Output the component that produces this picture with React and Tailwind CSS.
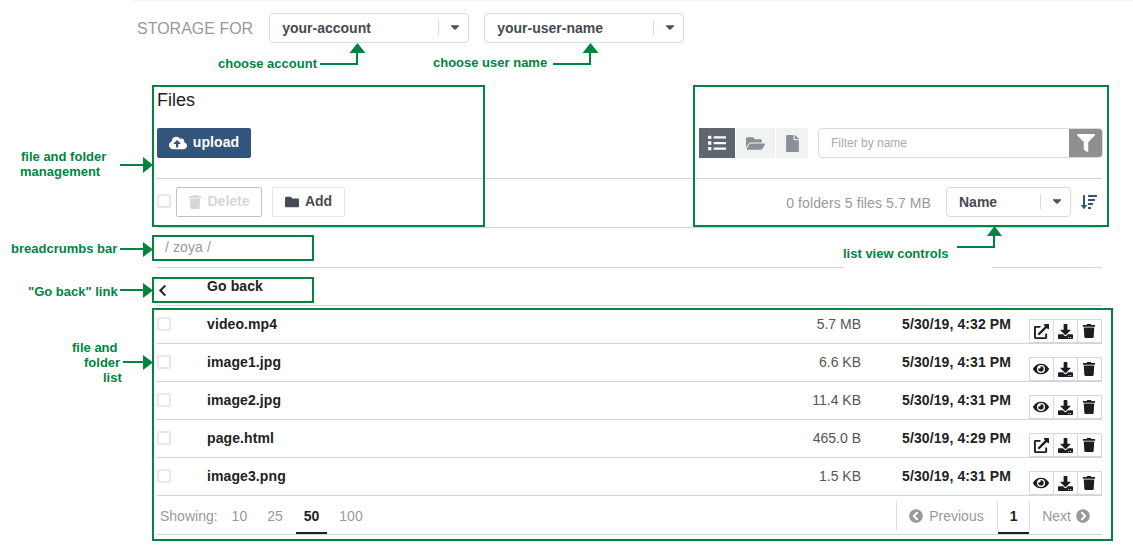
import React from "react";
import {
  FaCaretDown, FaCloudUploadAlt, FaTrash, FaFolder, FaFolderOpen, FaFile, FaList, FaFilter,
  FaEye, FaDownload, FaExternalLinkAlt, FaChevronLeft, FaChevronCircleLeft, FaChevronCircleRight, FaSortAmountDown,
} from "react-icons/fa";

const rows = [
  { name: "video.mp4", size: "5.7 MB", date: "5/30/19, 4:32 PM", ext: true },
  { name: "image1.jpg", size: "6.6 KB", date: "5/30/19, 4:31 PM" },
  { name: "image2.jpg", size: "11.4 KB", date: "5/30/19, 4:31 PM" },
  { name: "page.html", size: "465.0 B", date: "5/30/19, 4:29 PM", ext: true },
  { name: "image3.png", size: "1.5 KB", date: "5/30/19, 4:31 PM" },
];

function Select({ label, width, textWidth, className = "" }) {
  return (
    <div className={`flex items-center h-[30px] border border-[#d8dbde] rounded-[4px] bg-white ${width} ${className}`}>
      <span className={`pl-3 font-bold text-[14px] text-[#444b52] ${textWidth}`}>{label}</span>
      <span className="w-px h-[15px] bg-[#d8dbde] -mt-[1px]" />
      <FaCaretDown className="ml-[9px] text-[14px] text-[#4a5158] -mt-[2px]" />
    </div>
  );
}

function Check({ className = "" }) {
  return <span className={`block w-[14px] h-[14px] border-2 border-[#e6e8ea] rounded-[2px] bg-white ${className}`} />;
}

function ActionBtn({ children }) {
  return <span className="w-[25px] h-6 pr-px flex items-center justify-center border border-[#d3d9e0] -ml-px first:ml-0 text-[#1d1d1f]">{children}</span>;
}

function Box({ className }) {
  return <div className={`absolute border-2 border-[#00843f] pointer-events-none ${className}`} />;
}

function Label({ className, children }) {
  return <div className={`absolute font-bold text-[13px] leading-[16px] text-[#00843f] whitespace-nowrap ${className}`}>{children}</div>;
}

export default function App() {
  return (
    <div className="relative w-[1133px] h-[553px] overflow-hidden bg-white text-[14px] font-['Liberation_Sans',Arial,sans-serif]">
      <header className="ml-[133px] h-[85px] border-t border-[#f3f3f3] pl-[4px] pt-[12px]">
        <div className="flex items-center">
          <span className="text-[16px] text-[#999] mr-[16px] mt-[1px]">STORAGE FOR</span>
          <Select label="your-account" width="w-[200px]" textWidth="w-[168px]" className="mr-[15px]" />
          <Select label="your-user-name" width="w-[200px]" textWidth="w-[168px]" />
        </div>
      </header>

      <main className="ml-[157px] w-[945px]">
        <section className="flex justify-between h-[94px] border-b border-[#cfd5db]">
          <div>
            <h1 className="text-[18px] leading-[20px] text-[#222] mt-[5px]">Files</h1>
            <button className="mt-[18px] flex items-center justify-center gap-[6px] w-[94px] h-[30px] rounded-[2px] bg-[#34557b] text-white font-bold text-[14px] tracking-[0.1px]">
              <FaCloudUploadAlt className="text-[18px]" />
              <span className="-mt-[2px]">upload</span>
            </button>
          </div>
          <div className="flex items-start pt-[43px] -mr-px">
            <span className="w-[36px] h-[30px] flex items-center justify-center bg-[#5f666d] text-white text-[18px]"><FaList /></span>
            <span className="ml-px w-[39px] h-[30px] flex items-center justify-center bg-[#f1f3f3] text-[#8a9098] text-[19px]"><FaFolderOpen /></span>
            <span className="ml-px w-[32px] h-[30px] flex items-center justify-center bg-[#f1f3f3] text-[#8a9098] text-[17px]"><FaFile /></span>
            <div className="ml-[10px] w-[285px] h-[30px] flex border border-[#d8dbde] rounded-[4px] overflow-hidden">
              <span className="flex-1 pl-3 text-[12px] leading-[28px] text-[#aaa]">Filter by name</span>
              <span className="w-[34px] -my-px -mr-px flex items-center justify-center bg-[#8f8f8f] text-white text-[18px]"><FaFilter /></span>
            </div>
          </div>
        </section>

        <section className="flex items-start justify-between h-[49px] border-b border-[#cfd5db] pt-[8px]">
          <div className="flex items-start">
            <Check className="mt-[7px]" />
            <button className="ml-[5px] w-[86px] h-[30px] flex items-center justify-center gap-[5px] border border-[#bfc0c2] rounded-[2px] font-bold text-[#d5d7d9]">
              <FaTrash className="text-[14px]" />
              <span className="-mt-px">Delete</span>
            </button>
            <button className="ml-[10px] w-[73px] h-[30px] flex items-center justify-center gap-[6px] border border-[#e3e5e7] rounded-[2px] font-bold text-[#444b52]">
              <FaFolder className="text-[14px]" />
              <span className="-mt-px">Add</span>
            </button>
          </div>
          <div className="flex items-center">
            <span className="text-[#999] mt-[2px] mr-[15px] tracking-[0.1px]">0 folders 5 files 5.7 MB</span>
            <Select label="Name" width="w-[125px]" textWidth="w-[93px]" />
            <FaSortAmountDown className="ml-[10px] mr-[5px] text-[16px] text-[#34557b]" />
          </div>
        </section>

        <section className="h-[40px] border-b border-[#cfd5db] pl-[8px] pt-[9px] leading-[20px] tracking-[0.1px] text-[#999]">/ zoya /</section>

        <section className="relative h-[38px] border-b border-[#cfd5db] flex items-start pt-[8px]">
          <FaChevronLeft className="-ml-px mt-[8px] text-[13px] text-[#222]" />
          <span className="ml-[38px] font-bold leading-[20px] tracking-[0.1px] text-[#222]">Go back</span>
        </section>

        {rows.map((r) => (
          <div key={r.name} className="flex items-start h-[38px] border-b border-[#cfd5db] pt-[8px] leading-[20px]">
            <Check className="mt-[3px]" />
            <span className="ml-[36px] w-[300px] font-bold tracking-[0.1px] text-[#222]">{r.name}</span>
            <span className="ml-[220px] w-[134px] text-right text-[#555]">{r.size}</span>
            <span className="w-[150px] text-right font-bold tracking-[0.1px] text-[#222]">{r.date}</span>
            <span className="ml-[18px] self-end flex">
              <ActionBtn>{r.ext ? <FaExternalLinkAlt className="text-[15px]" /> : <FaEye className="text-[16px]" />}</ActionBtn>
              <ActionBtn><FaDownload className="text-[15px]" /></ActionBtn>
              <ActionBtn><FaTrash className="text-[14px]" /></ActionBtn>
            </span>
          </div>
        ))}

        <footer className="flex justify-between h-[39px] border-b border-[#cfd5db] text-[#999]">
          <div className="flex items-start pt-[10px] leading-[20px] pl-[3px]">
            <span>Showing:</span>
            <span className="ml-[14px]">10</span>
            <span className="ml-[20px]">25</span>
            <span className="ml-[21px] relative font-bold text-[#222]">50
              <span className="absolute left-[-8px] right-[-8px] top-[26px] h-[2px] bg-[#222]" />
            </span>
            <span className="ml-[20px]">100</span>
          </div>
          <div className="flex items-start pt-[5px] leading-[20px]">
            <div className="h-[30px] w-[101px] border-l border-[#dcdfe2] flex items-center pl-[12px] gap-[6px]">
              <FaChevronCircleLeft className="text-[14px]" /><span>Previous</span>
            </div>
            <div className="relative h-[30px] w-[33px] border-x border-[#dcdfe2] flex items-center justify-center font-bold text-[#222]">1
              <span className="absolute left-0 right-0 top-[31px] h-[2px] bg-[#222]" />
            </div>
            <div className="flex h-[30px] items-center pl-[12px] pr-[12px] gap-[5px]">
              <span>Next</span><FaChevronCircleRight className="text-[14px]" />
            </div>
          </div>
        </footer>
      </main>

      <Box className="left-[152px] top-[85px] w-[333px] h-[142px]" />
      <Box className="left-[693px] top-[85px] w-[416px] h-[142px]" />
      <Box className="left-[152px] top-[235px] w-[162px] h-[26px]" />
      <Box className="left-[152px] top-[277px] w-[162px] h-[26px]" />
      <Box className="left-[152px] top-[308px] w-[961px] h-[233px]" />

      <Label className="left-[843px] top-[244px] w-[149px] h-[24px] bg-white pt-[2px]">list view controls</Label>

      <svg className="absolute left-0 top-0 pointer-events-none" width="1133" height="553" fill="#00843f" stroke="none">
        <g fill="none" stroke="#00843f" strokeWidth="2">
          <path d="M320 64H357V52" />
          <path d="M553 64H590V52" />
          <path d="M120 165H144" />
          <path d="M957 247H994V235" />
          <path d="M120 249H144" />
          <path d="M120 290H144" />
          <path d="M123 362H144" />
        </g>
        <polygon points="357.5,43 349.5,53 365.5,53" />
        <polygon points="590.5,43 582.5,53 598.5,53" />
        <polygon points="994.5,226 987,236 1002,236" />
        <polygon points="153,165 143,157 143,173" />
        <polygon points="153,249.5 143,242 143,257" />
        <polygon points="153,290.5 143,283 143,298" />
        <polygon points="153,362.5 143,355 143,370" />
      </svg>

      <Label className="left-[218px] top-[56px]">choose account</Label>
      <Label className="left-[433px] top-[55px]">choose user name</Label>
      <Label className="left-[21px] top-[149px]">file and folder</Label>
      <Label className="left-[20px] top-[164px]">management</Label>
      <Label className="left-[11px] top-[241px]">breadcrumbs bar</Label>
      <Label className="left-[28px] top-[284px]">"Go back" link</Label>
      <Label className="left-[72px] top-[340px]">file and</Label>
      <Label className="left-[84px] top-[355px]">folder</Label>
      <Label className="left-[103px] top-[370px]">list</Label>
    </div>
  );
}
